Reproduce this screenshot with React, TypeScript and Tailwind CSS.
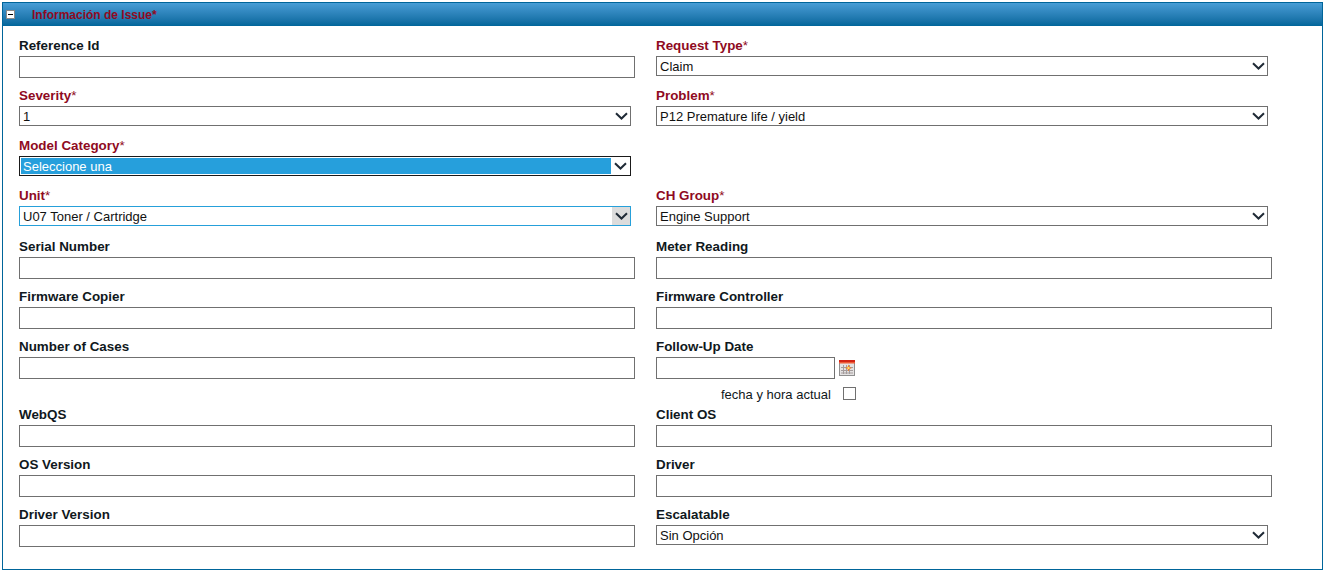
import { ReactNode } from "react"

function Chevron() {
  return (
    <svg width="13" height="8" viewBox="0 0 13 8" fill="none">
      <path d="M1 1.2 L6.5 6.5 L12 1.2" stroke="#1f2a36" strokeWidth="2" />
    </svg>
  )
}

function Label({ children, required }: { children: ReactNode; required?: boolean }) {
  return (
    <label
      className={
        "block h-[18px] text-[13.4px] leading-[16px] font-bold" +
        (required ? " text-[#8f0a22]" : " text-[#101820]")
      }
    >
      {children}
      {required && <span className="font-normal">*</span>}
    </label>
  )
}

function TextField({ label }: { label: string }) {
  return (
    <div>
      <Label>{label}</Label>
      <input type="text" className="block h-[22px] w-[616px] border border-[#707070] bg-white outline-none" />
    </div>
  )
}

function SelectField({
  label,
  value,
  required,
  variant,
}: {
  label: string
  value: string
  required?: boolean
  variant?: "active" | "hover"
}) {
  const active = variant === "active"
  const hover = variant === "hover"
  return (
    <div>
      <Label required={required}>{label}</Label>
      <div
        className={
          "flex h-5 w-[612px] border bg-white " +
          (active ? "border-[#1a1a1a] p-px" : hover ? "border-[#26a0da]" : "border-[#707070]")
        }
      >
        <select
          defaultValue={value}
          className={
            "min-w-0 flex-1 appearance-none rounded-none text-[13px] leading-[18px] outline-none " +
            (active ? "bg-[#269fdc] pl-[2px] text-white" : "bg-transparent pt-px pl-[3px] text-[#111]")
          }
        >
          <option>{value}</option>
        </select>
        <div className={"flex w-[18px] shrink-0 items-center justify-center " + (hover ? "bg-[#dcdcdc]" : "")}>
          <Chevron />
        </div>
      </div>
    </div>
  )
}

function CalendarIcon() {
  return (
    <svg width="16" height="16" viewBox="0 0 16 16" className="block">
      <rect x="0.5" y="0.5" width="15" height="15" fill="#e4e2e2" stroke="#8f8f8f" />
      <rect x="0" y="0" width="16" height="2" fill="#d32414" />
      <rect x="0" y="2" width="16" height="1.500" fill="#ee5a36" />
      <path d="M2 7.500h12M2 10.500h12M2 13h12M4.500 5v9M7.500 5v9M10.500 5v9" stroke="#a49c9c" strokeWidth="1" />
      <path d="M9.500 4.500l1 2.500 2.500 1-2.500 1-1 2.500-1-2.500-2.500-1 2.500-1z" fill="#f27a2a" />
      <rect x="8.500" y="7" width="2" height="2" fill="#fbe26a" />
    </svg>
  )
}

function Row({ className, children }: { className: string; children: ReactNode }) {
  return <div className={"grid grid-cols-[637px_1fr] " + className}>{children}</div>
}

export default function App() {
  return (
    <div className="h-[572px] bg-white p-[2px] font-['Liberation_Sans',Arial,sans-serif]">
      <div className="h-[568px] border border-[#00659a]">
        <div className="flex h-[23px] items-center bg-gradient-to-b from-[#479dd6] to-[#00669b] pl-[3px]">
          <div className="flex h-[9px] w-[9px] items-center justify-center border border-[#8a8a8a] bg-white">
            <div className="h-px w-[5px] bg-black" />
          </div>
          <span className="ml-[17px] text-xs font-bold text-[#8f0a22]">Información de Issue*</span>
        </div>
        <div className="pt-3 pl-4">
          <Row className="h-[50px]">
            <TextField label="Reference Id" />
            <SelectField label="Request Type" value="Claim" required />
          </Row>
          <Row className="h-[50px]">
            <SelectField label="Severity" value="1" required />
            <SelectField label="Problem" value="P12 Premature life / yield" required />
          </Row>
          <Row className="h-[50px]">
            <SelectField label="Model Category" value="Seleccione una" required variant="active" />
            <div />
          </Row>
          <Row className="h-[51px]">
            <SelectField label="Unit" value="U07 Toner / Cartridge" required variant="hover" />
            <SelectField label="CH Group" value="Engine Support" required />
          </Row>
          <Row className="h-[50px]">
            <TextField label="Serial Number" />
            <TextField label="Meter Reading" />
          </Row>
          <Row className="h-[50px]">
            <TextField label="Firmware Copier" />
            <TextField label="Firmware Controller" />
          </Row>
          <Row className="h-[68px]">
            <TextField label="Number of Cases" />
            <div>
              <Label>Follow-Up Date</Label>
              <div className="flex items-center">
                <input type="text" className="block h-[22px] w-[179px] border border-[#707070] outline-none" />
                <span className="ml-[4px]">
                  <CalendarIcon />
                </span>
              </div>
              <div className="mt-[8px] flex items-start pl-[65px]">
                <span className="pt-px text-[13px] leading-[14px] text-[#101820]">fecha y hora actual</span>
                <span className="ml-3 h-[13px] w-[13px] border border-[#707070] bg-white" />
              </div>
            </div>
          </Row>
          <Row className="h-[50px]">
            <TextField label="WebQS" />
            <TextField label="Client OS" />
          </Row>
          <Row className="h-[50px]">
            <TextField label="OS Version" />
            <TextField label="Driver" />
          </Row>
          <Row className="h-[50px]">
            <TextField label="Driver Version" />
            <SelectField label="Escalatable" value="Sin Opción" />
          </Row>
        </div>
      </div>
    </div>
  )
}
